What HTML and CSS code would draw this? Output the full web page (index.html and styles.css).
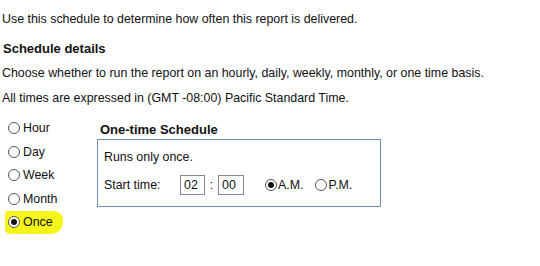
FILE: index.html
```html
<!DOCTYPE html>
<html lang="en">
<head>
  <meta charset="UTF-8">
  <title>Schedule</title>
  <link rel="stylesheet" href="styles.css">
</head>
<body>
  <p class="intro">Use this schedule to determine how often this report is delivered.</p>
  <h3>Schedule details</h3>
  <p>Choose whether to run the report on an hourly, daily, weekly, monthly, or one time basis.</p>
  <p>All times are expressed in (GMT -08:00) Pacific Standard Time.</p>

  <div class="schedule">
    <div class="types">
      <label class="opt"><span class="radio"></span>Hour</label>
      <label class="opt"><span class="radio"></span>Day</label>
      <label class="opt"><span class="radio"></span>Week</label>
      <label class="opt"><span class="radio"></span>Month</label>
      <label class="opt marked"><span class="radio on"></span>Once</label>
    </div>

    <div class="detail">
      <h4>One-time Schedule</h4>
      <div class="box">
        <p>Runs only once.</p>
        <div class="time">
          <span class="lbl">Start time:</span>
          <span class="field">02</span>
          <span class="colon">:</span>
          <span class="field wide">00</span>
          <label class="opt ampm"><span class="radio on"></span>A.M.</label>
          <label class="opt ampm"><span class="radio"></span>P.M.</label>
        </div>
      </div>
    </div>
  </div>
</body>
</html>
```

FILE: styles.css
```css
body {
  font-family: "Liberation Sans", Arial, sans-serif;
  font-size: 12.4px;
  color: #111;
  margin: 0;
  padding: 12px 2px 0 2px;
  background: #fff;
}
p {
  margin: 0 0 10px 0;
  line-height: 15px;
}
.intro {
  margin-bottom: 13.5px;
}
h3 {
  font-size: 13px;
  margin: 0 0 10px 1px;
  line-height: 15px;
}
.schedule {
  display: flex;
  padding-top: 1px;
}
.types {
  width: 95px;
  padding-left: 6px;
  box-sizing: border-box;
}
.opt {
  display: flex;
  align-items: center;
  height: 23.5px;
}
.radio {
  width: 12px;
  height: 12px;
  border: 1px solid #555;
  border-radius: 50%;
  margin-right: 3px;
  box-sizing: border-box;
  background: #fff;
  position: relative;
  flex: none;
}
.radio.on::after {
  content: "";
  position: absolute;
  left: 2px;
  top: 2px;
  width: 6px;
  height: 6px;
  border-radius: 50%;
  background: #111;
}
.marked {
  background: #f5f51a;
  width: 58px;
  margin-left: -3px;
  padding-left: 3px;
  box-sizing: border-box;
  border-radius: 3px 9px 12px 5px;
}
.detail {
  padding-top: 5px;
}
h4 {
  font-size: 13px;
  margin: 0 0 2px 3px;
  line-height: 15px;
}
.box {
  width: 284px;
  border: 1px solid #6b8db8;
  padding: 10px 6px 11px 6px;
  box-sizing: border-box;
}
.box p {
  margin-bottom: 10.5px;
}
.time {
  display: flex;
  align-items: center;
  height: 20px;
}
.lbl {
  width: 76px;
}
.field {
  border: 1px solid #888;
  width: 25px;
  height: 20px;
  line-height: 18px;
  padding-left: 3px;
  box-sizing: border-box;
}
.field.wide {
  width: 26px;
}
.colon {
  width: 13px;
  text-align: center;
}
.ampm {
  margin-left: 21px;
  height: 20px;
}
.ampm .radio {
  margin-right: 1px;
}
.ampm + .ampm {
  margin-left: 12px;
}
```
